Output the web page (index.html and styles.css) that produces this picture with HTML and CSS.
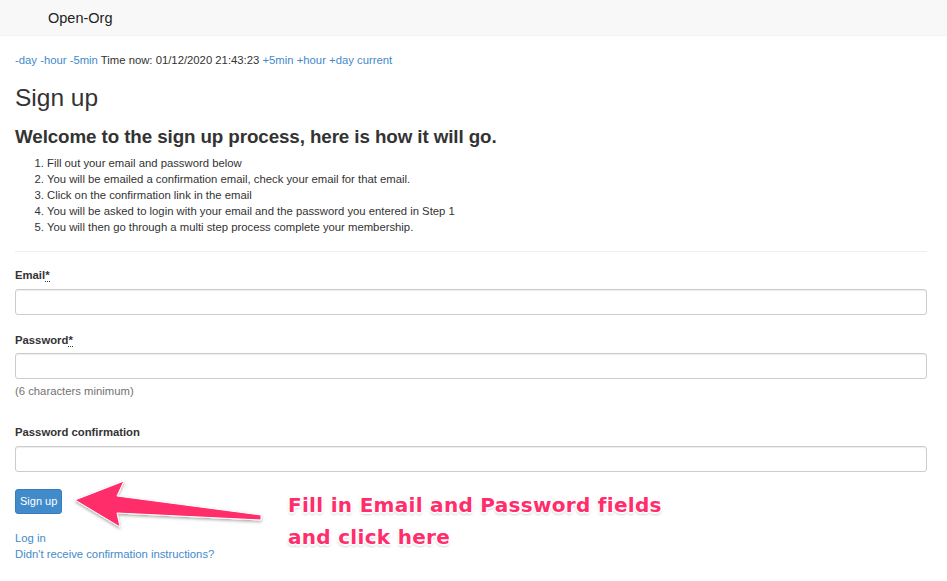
FILE: index.html
```html
<!DOCTYPE html>
<html>
<head>
<meta charset="utf-8">
<title>Sign up</title>
<link rel="stylesheet" href="styles.css">
</head>
<body>
<div class="navbar"><span class="brand">Open-Org</span></div>
<div class="page">
  <div class="timebar">
    <a href="#">-day</a> <a href="#">-hour</a> <a href="#">-5min</a> Time now: 01/12/2020 21:43:23 <a href="#">+5min</a> <a href="#">+hour</a> <a href="#">+day</a> <a href="#">current</a>
  </div>
  <h1 class="title">Sign up</h1>
  <h3 class="subtitle">Welcome to the sign up process, here is how it will go.</h3>
  <ol class="steps">
    <li>Fill out your email and password below</li>
    <li>You will be emailed a confirmation email, check your email for that email.</li>
    <li>Click on the confirmation link in the email</li>
    <li>You will be asked to login with your email and the password you entered in Step 1</li>
    <li>You will then go through a multi step process complete your membership.</li>
  </ol>
  <hr class="sep">
  <form class="form">
    <div class="group">
      <label class="label">Email<abbr title="required">*</abbr></label>
      <input class="input" type="email">
    </div>
    <div class="group">
      <label class="label">Password<abbr title="required">*</abbr></label>
      <input class="input" type="password">
      <p class="help">(6 characters minimum)</p>
    </div>
    <div class="group">
      <label class="label">Password confirmation</label>
      <input class="input" type="password">
    </div>
    <div class="actions"><button class="btn" type="button">Sign up</button></div>
  </form>
  <div class="links">
    <a href="#">Log in</a><br>
    <a href="#">Didn't receive confirmation instructions?</a>
  </div>
</div>
<svg class="arrow" width="200" height="60" viewBox="70 475 200 60">
  <defs>
    <filter id="sh" x="-10%" y="-20%" width="120%" height="160%">
      <feDropShadow dx="0" dy="1.5" stdDeviation="1.5" flood-color="#000" flood-opacity="0.35"/>
    </filter>
  </defs>
  <polygon filter="url(#sh)" fill="#ff2d6b" stroke="#ffffff" stroke-width="1" stroke-linejoin="round"
    points="75,500 124,481 117,496 261,515 261,520 117,513 120,527"/>
</svg>
<div class="note">Fill in Email and Password fields<br>and click here</div>
</body>
</html>
```
FILE: styles.css
```css
* { box-sizing: border-box; }
html, body { margin: 0; padding: 0; background: #fff; }
body {
  font-family: "Liberation Sans", Arial, sans-serif;
  font-size: 11.3px;
  line-height: 16px;
  color: #333;
  position: relative;
  width: 947px;
  height: 581px;
  overflow: hidden;
}
a { color: #428bca; text-decoration: none; }
.navbar {
  height: 36px;
  background: #f8f8f8;
  border-bottom: 1px solid #f3f3f3;
  display: flex;
  align-items: center;
  padding-left: 48px;
}
.brand { font-size: 14.5px; color: #222; }
.page { padding: 0 20px 0 15px; }
.timebar { padding-top: 16px; line-height: 16px; }
.title {
  margin: 16px 0 0;
  font-size: 24.5px;
  line-height: 28px;
  font-weight: 500;
  color: #333;
}
.subtitle {
  margin: 13px 0 0;
  font-size: 18.8px;
  line-height: 24px;
  font-weight: 700;
  color: #333;
  letter-spacing: -0.1px;
}
.steps { margin: 6px 0 0; padding-left: 32px; }
.steps li { line-height: 16px; }
.sep { margin: 16px 0 0; border: 0; border-top: 1px solid #eee; height: 0; }
.form { margin-top: 15px; display: flex; flex-direction: column; }
.group { display: flex; flex-direction: column; margin-bottom: 17px; }
.label {
  display: block;
  font-weight: 700;
  line-height: 16px;
  margin-bottom: 5.5px;
}
.label abbr { text-decoration: none; border-bottom: 1px dotted #333; cursor: help; }
.input {
  display: block;
  width: 100%;
  height: 26px;
  border: 1px solid #ccc;
  border-radius: 3px;
  background: #fff;
  box-shadow: inset 0 1px 1px rgba(0,0,0,0.075);
  font: inherit;
  padding: 4px 8px;
}
.help { margin: 4px 0 8px; color: #737373; line-height: 16px; }
.actions { display: flex; }
.btn {
  display: block;
  height: 25px;
  padding: 0 4px;
  background: #428bca;
  border: 1px solid #357ebd;
  border-radius: 3px;
  color: #fff;
  font: inherit;
  font-size: 11px;
}
.links { margin-top: 16px; line-height: 16px; }
.arrow { position: absolute; left: 70px; top: 475px; overflow: visible; }
.note {
  position: absolute;
  left: 288px;
  top: 489px;
  font-family: "DejaVu Sans", Verdana, sans-serif;
  font-size: 20px;
  line-height: 32px;
  font-weight: 700;
  color: #ff2d6b;
  white-space: nowrap;
  letter-spacing: 0.3px;
  text-shadow:
    -1.5px 0 0 #fff, 1.5px 0 0 #fff, 0 -1.5px 0 #fff, 0 1.5px 0 #fff,
    -1px -1px 0 #fff, 1px -1px 0 #fff, -1px 1px 0 #fff, 1px 1px 0 #fff,
    0 2px 3px rgba(0,0,0,0.35);
}
```
